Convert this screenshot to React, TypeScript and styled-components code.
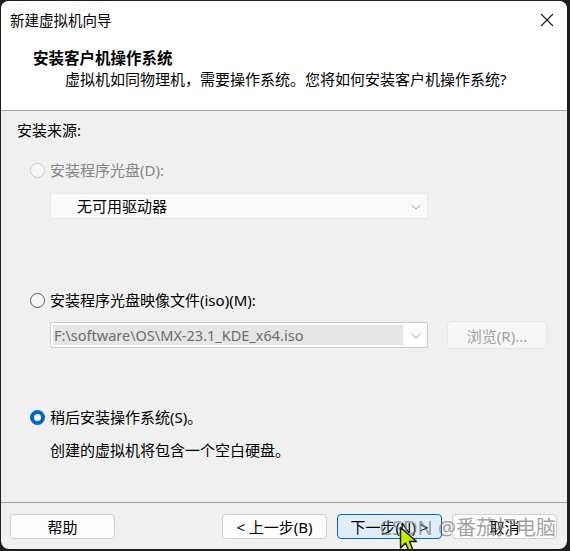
import styled, { createGlobalStyle } from 'styled-components';

const GlobalStyle = createGlobalStyle`
  html, body {
    margin: 0;
    padding: 0;
    background: #1f1f1f;
  }
  * {
    box-sizing: border-box;
  }
`;

const FONT = `"Noto Sans", "Noto Sans CJK SC", sans-serif`;

const App = () => {
  return (
    <PageStyle>
      <GlobalStyle />
      <WindowStyle>
        <GhostMark>番茄打电脑</GhostMark>
        <TitleBar>
          <span>新建虚拟机向导</span>
          <CloseButton aria-label="close">
            <svg width="14" height="14" viewBox="0 0 14 14">
              <path d="M1 1 L13 13 M13 1 L1 13" stroke="#1a1a1a" strokeWidth="1.1" />
            </svg>
          </CloseButton>
        </TitleBar>
        <HeaderStyle>
          <h1>安装客户机操作系统</h1>
          <p>虚拟机如同物理机，需要操作系统。您将如何安装客户机操作系统?</p>
        </HeaderStyle>
        <BodyStyle>
          <SectionLabel>安装来源:</SectionLabel>

          <RadioRow $mt={20} $disabled>
            <RadioDot $state="disabled" />
            <span>安装程序光盘(D):</span>
          </RadioRow>
          <FieldRow $mt={13}>
            <SelectBox $variant="disabled">
              <span className="value">无可用驱动器</span>
              <Chevron />
            </SelectBox>
          </FieldRow>

          <RadioRow $mt={71}>
            <RadioDot $state="off" />
            <span>安装程序光盘映像文件(iso)(M):</span>
          </RadioRow>
          <FieldRow $mt={11}>
            <SelectBox $variant="filled">
              <span className="value">F:\software\OS\MX-23.1_KDE_x64.iso</span>
              <Chevron />
            </SelectBox>
            <BrowseButton disabled>浏览(R)...</BrowseButton>
          </FieldRow>

          <RadioRow $mt={58}>
            <RadioDot $state="on" />
            <span>稍后安装操作系统(S)。</span>
          </RadioRow>
          <NoteStyle>创建的虚拟机将包含一个空白硬盘。</NoteStyle>
        </BodyStyle>
        <FooterStyle>
          <DialogButton>帮助</DialogButton>
          <Spacer />
          <DialogButton>&lt; 上一步(B)</DialogButton>
          <DialogButton $primary>下一步(N) &gt;</DialogButton>
          <DialogButton>取消</DialogButton>
        </FooterStyle>
        <Watermark>CSDN @番茄打电脑</Watermark>
        <Cursor width="22" height="30" viewBox="0 0 22 30">
          <path
            d="M1.5 1.5 L1.5 22 L6.5 17 L10.5 26.5 L14.5 25 L10.5 15.5 L17.5 15.5 Z"
            fill="#c4ec00"
            stroke="#1a1a1a"
            strokeWidth="1.4"
            strokeLinejoin="round"
          />
        </Cursor>
      </WindowStyle>
    </PageStyle>
  );
};

const Chevron = () => (
  <ChevronIcon width="10" height="6" viewBox="0 0 10 6">
    <path d="M0.5 0.5 L5 5 L9.5 0.5" fill="none" stroke="#a6a6a6" strokeWidth="1" />
  </ChevronIcon>
);

export default App;

const PageStyle = styled.div`
  width: 570px;
  height: 551px;
  padding: 1px 3px 2px 1px;
  font-family: ${FONT};
  font-size: 15px;
  color: #000;
`;

const WindowStyle = styled.div`
  position: relative;
  width: 100%;
  height: 100%;
  display: flex;
  flex-direction: column;
  background: #f0f0f0;
  border-radius: 8px;
  overflow: hidden;
`;

const GhostMark = styled.span`
  position: absolute;
  top: -14px;
  left: 9px;
  font-size: 20px;
  color: rgba(0, 0, 0, 0.035);
  pointer-events: none;
`;

const TitleBar = styled.div`
  height: 37px;
  flex: none;
  display: flex;
  align-items: center;
  justify-content: space-between;
  padding: 0 0 0 9px;
  background: #ffffff;
  font-size: 14.5px;
  line-height: 20px;
`;

const CloseButton = styled.div`
  width: 46px;
  height: 37px;
  display: flex;
  align-items: center;
  justify-content: center;
  margin-right: -3px;
`;

const HeaderStyle = styled.div`
  flex: none;
  background: #ffffff;
  padding: 10px 0 21px 32px;
  border-bottom: 1px solid #a0a0a0;

  h1 {
    margin: 0;
    font-size: 15.5px;
    font-weight: 700;
    line-height: 20px;
  }
  p {
    margin: 1px 0 0 32px;
    font-size: 15px;
    line-height: 20px;
  }
`;

const BodyStyle = styled.div`
  flex: 1;
  display: flex;
  flex-direction: column;
  padding: 9px 16px 0 16px;
`;

const SectionLabel = styled.div`
  line-height: 20px;
`;

const RadioRow = styled.label<{ $mt: number; $disabled?: boolean }>`
  display: flex;
  align-items: center;
  gap: 5px;
  height: 20px;
  margin: ${(p) => p.$mt}px 0 0 13px;
  line-height: 20px;
  color: ${(p) => (p.$disabled ? '#858585' : '#000')};
`;

const RadioDot = styled.span<{ $state: 'disabled' | 'off' | 'on' }>`
  width: 15px;
  height: 15px;
  border-radius: 50%;
  flex: none;
  background: ${(p) => (p.$state === 'on' ? '#ffffff' : p.$state === 'disabled' ? '#f7f7f7' : '#f4f4f4')};
  border: ${(p) =>
    p.$state === 'on'
      ? '4px solid #0067c0'
      : p.$state === 'disabled'
      ? '1px solid #c8c8c8'
      : '1px solid #5c5c5c'};
`;

const FieldRow = styled.div<{ $mt: number }>`
  display: flex;
  align-items: center;
  gap: 19px;
  margin: ${(p) => p.$mt}px 0 0 33px;
`;

const SelectBox = styled.div<{ $variant: 'disabled' | 'filled' }>`
  position: relative;
  width: 378px;
  height: 26px;
  display: flex;
  align-items: center;
  padding: ${(p) => (p.$variant === 'disabled' ? '0 0 0 26px' : '2px 24px 2px 2px')};
  background: ${(p) => (p.$variant === 'disabled' ? '#fafafa' : '#fdfdfd')};
  border: 1px solid ${(p) => (p.$variant === 'disabled' ? '#e8e8e8' : '#cccccc')};
  border-radius: 2px;

  .value {
    display: flex;
    align-items: center;
    height: 100%;
    line-height: 20px;
    ${(p) =>
      p.$variant === 'filled'
        ? `flex: 1; background: #e6e6e6; color: #6d6d6d; padding-left: 1px; font-size: 14.5px;`
        : `color: #000;`}
  }
`;

const ChevronIcon = styled.svg`
  position: absolute;
  right: 6px;
  top: 10px;
`;

const BrowseButton = styled.button`
  width: 100px;
  height: 28px;
  font-family: ${FONT};
  font-size: 15px;
  color: #a3a3a3;
  background: #f6f6f6;
  border: 1px solid #e6e6e6;
  border-radius: 4px;
  padding: 0;
`;

const NoteStyle = styled.div`
  margin: 13px 0 0 33px;
  line-height: 20px;
`;

const FooterStyle = styled.div`
  flex: none;
  display: flex;
  align-items: center;
  gap: 10px;
  padding: 11px 10px 10px 9px;
  border-top: 1px solid #a0a0a0;
`;

const Spacer = styled.div`
  flex: 1;
`;

const DialogButton = styled.button<{ $primary?: boolean }>`
  width: 105px;
  height: 25px;
  padding: 0;
  font-family: ${FONT};
  font-size: 15px;
  line-height: 20px;
  color: #000;
  background: ${(p) => (p.$primary ? '#e0edf9' : '#fdfdfd')};
  border: 1px solid ${(p) => (p.$primary ? '#0067c0' : '#d0d0d0')};
  border-radius: 4px;
`;

const Watermark = styled.span`
  position: absolute;
  right: 11px;
  bottom: 9px;
  font-size: 20px;
  line-height: 24px;
  color: rgba(120, 120, 120, 0.7);
  pointer-events: none;
`;

const Cursor = styled.svg`
  position: absolute;
  left: 398px;
  top: 525px;
`;
